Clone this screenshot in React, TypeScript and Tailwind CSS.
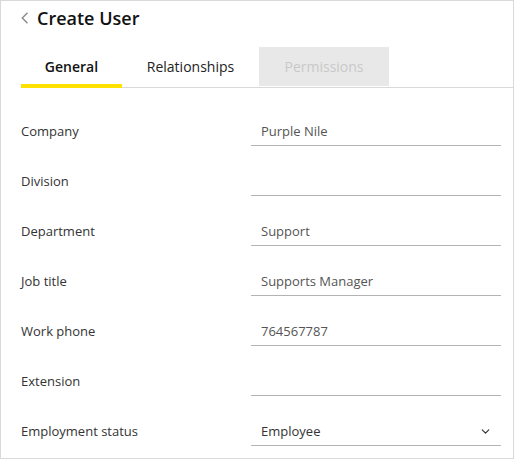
import { ChevronDown } from 'lucide-react';

const fields: { label: string; value: string; select?: boolean }[] = [
    { label: 'Company', value: 'Purple Nile' },
    { label: 'Division', value: '' },
    { label: 'Department', value: 'Support' },
    { label: 'Job title', value: 'Supports Manager' },
    { label: 'Work phone', value: '764567787' },
    { label: 'Extension', value: '' },
    { label: 'Employment status', value: 'Employee', select: true },
];

const BackIcon = () => (
    <svg width="8" height="12" viewBox="0 0 8 12" fill="none" className="shrink-0">
        <path d="M6.5 0.8 L1.3 6 L6.5 11.2" stroke="#8a8a8a" strokeWidth="1.4" />
    </svg>
);

export default function App() {
    return (
        <div className="w-[514px] h-[459px] border border-[#d9d9d9] bg-white font-['Open_Sans',sans-serif] text-[#222]">
            <div className="flex items-center gap-[8px] pl-[20px] pt-[5px] h-[29px]">
                <BackIcon />
                <h1 className="text-[18px] leading-[24px] font-semibold text-[#111]">Create User</h1>
            </div>

            <div className="ml-[20px] mt-[17px] flex items-start border-b border-[#d9d9d9]">
                <div className="w-[101px] h-[41px] -mb-px flex items-center justify-center border-b-4 border-[#ffe100] text-[14px] font-semibold text-[#111] pt-[2px]">
                    General
                </div>
                <div className="w-[137px] h-[41px] -mb-px flex items-center justify-center text-[14px] text-[#222] pb-[2px]">
                    Relationships
                </div>
                <div className="h-[39px] w-[130px] flex items-center justify-center bg-[#e8e8e8] text-[14px] text-[#c8c8c8]">
                    Permissions
                </div>
            </div>

            <div className="mt-[18px] pl-[20px] pr-[12px]">
                {fields.map((f) => (
                    <div key={f.label} className="h-[50px] flex items-center">
                        <div className="w-[230px] pt-[2px] text-[13px] text-[#333]">{f.label}</div>
                        <div className="w-[250px] h-[29px] flex items-center justify-between border-b border-[#b3b3b3] pl-[10px] pr-[9px] pt-[2px] text-[13px] text-[#555]">
                            <span className={f.select ? 'text-[#333]' : ''}>{f.value}</span>
                            {f.select && <ChevronDown size={13} strokeWidth={2.2} className="text-[#333]" />}
                        </div>
                    </div>
                ))}
            </div>
        </div>
    );
}
